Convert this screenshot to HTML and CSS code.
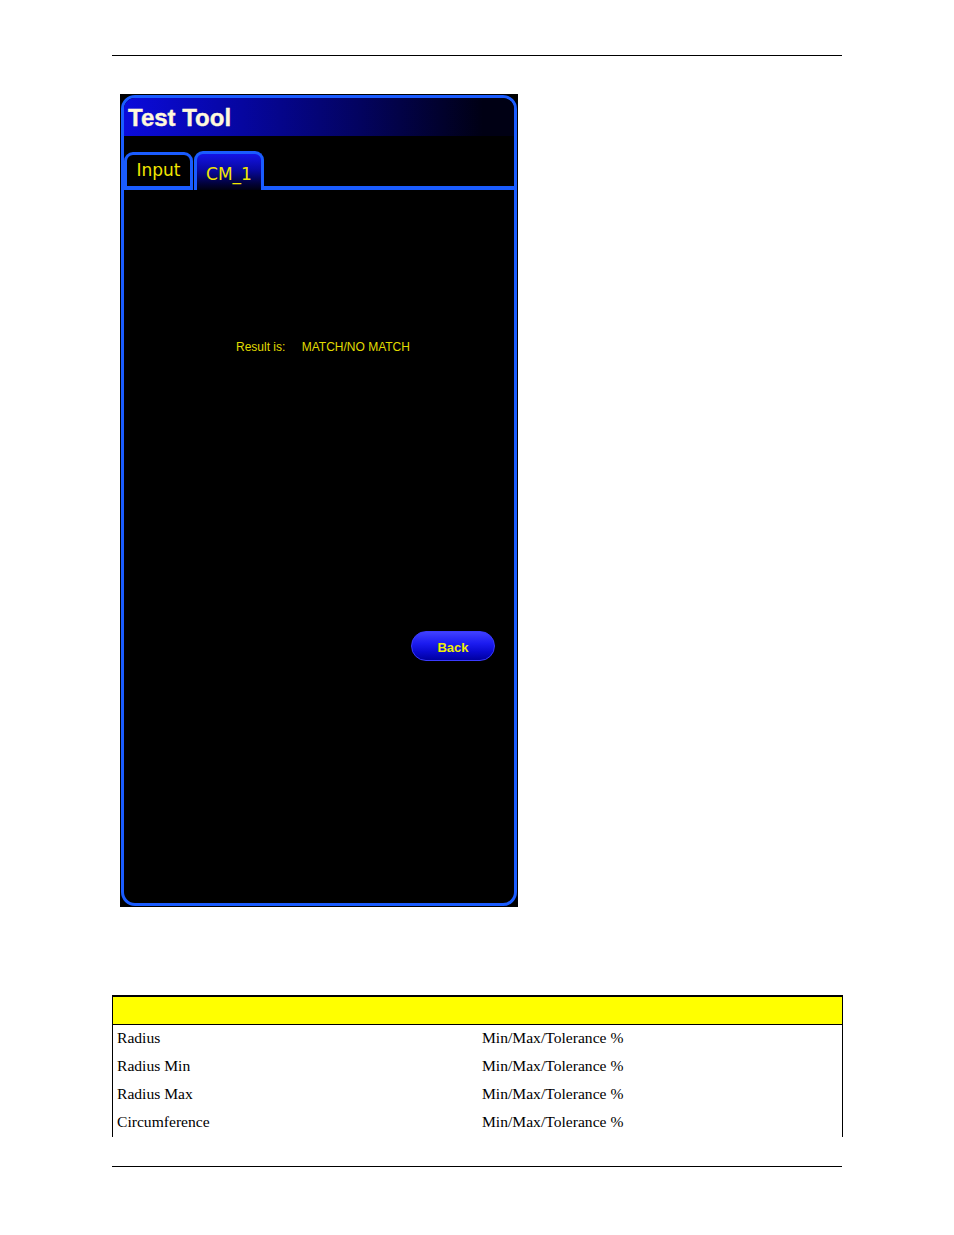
FILE: index.html
```html
<!DOCTYPE html>
<html>
<head>
<meta charset="utf-8">
<link rel="stylesheet" href="styles.css">
</head>
<body>
<div class="page">
  <div class="rule rule-top"></div>
  <div class="frame">
    <div class="window">
      <div class="titlebar">Test Tool</div>
      <div class="tabs">
        <div class="tab tab-input">Input</div>
        <div class="tab tab-active">CM_1</div>
        <div class="tab-fill"></div>
      </div>
      <div class="content">
        <div class="result">
          <span class="result-label">Result is:</span>
          <span class="result-value">MATCH/NO MATCH</span>
        </div>
        <div class="btn-back">Back</div>
      </div>
    </div>
  </div>
  <table class="spec">
    <tr class="spec-head"><td colspan="2"></td></tr>
    <tr><td class="c1">Radius</td><td class="c2">Min/Max/Tolerance %</td></tr>
    <tr><td class="c1">Radius Min</td><td class="c2">Min/Max/Tolerance %</td></tr>
    <tr><td class="c1">Radius Max</td><td class="c2">Min/Max/Tolerance %</td></tr>
    <tr><td class="c1">Circumference</td><td class="c2">Min/Max/Tolerance %</td></tr>
  </table>
  <div class="rule rule-bottom"></div>
</div>
</body>
</html>
```

FILE: styles.css
```css
html, body {
  margin: 0;
  padding: 0;
  background: #ffffff;
}
.page {
  width: 954px;
  height: 1235px;
  position: relative;
  font-family: "Liberation Serif", "Times New Roman", serif;
}
.rule {
  margin-left: 112px;
  width: 730px;
  border-top: 1px solid #000;
}
.rule-top {
  margin-top: 55px;
}
.frame {
  margin-left: 120px;
  margin-top: 38px;
  width: 398px;
  height: 813px;
  background: #000;
  padding: 1px;
  box-sizing: border-box;
}
.window {
  height: 100%;
  box-sizing: border-box;
  border: 3px solid #1a5cff;
  border-radius: 14px;
  display: flex;
  flex-direction: column;
  overflow: hidden;
  background: #000;
}
.titlebar {
  height: 38px;
  line-height: 38px;
  padding-left: 4px;
  padding-top: 1px;
  box-sizing: border-box;
  background: linear-gradient(90deg, #0b0bdb 0%, #0606a0 30%, #030360 60%, #000014 92%);
  color: #fff8dc;
  font-family: "Liberation Sans", Arial, sans-serif;
  font-weight: bold;
  font-size: 24px;
  -webkit-text-stroke: 0.4px #fff8dc;
  flex: none;
}
.tabs {
  margin-top: 15px;
  height: 39px;
  display: flex;
  align-items: flex-end;
  flex: none;
}
.tab {
  box-sizing: border-box;
  width: 70px;
  border: 3px solid #1a5cff;
  border-bottom: none;
  border-radius: 9px 9px 0 0;
  color: #f2e600;
  font-family: "DejaVu Sans", Verdana, sans-serif;
  font-size: 17px;
  text-align: center;
}
.tab-input {
  width: 69px;
  height: 38px;
  border-bottom: 4px solid #1a5cff;
  line-height: 30px;
  background: #000;
}
.tab-active {
  margin-left: 1px;
  height: 39px;
  line-height: 36px;
  padding-top: 2px;
  background: linear-gradient(180deg, #1414e6 0%, #0808a0 45%, #020240 80%, #000010 100%);
}
.tab-fill {
  flex: 1;
  height: 0;
  border-bottom: 4px solid #1a5cff;
  align-self: flex-end;
}
.content {
  flex: 1;
  display: flex;
  flex-direction: column;
  padding-top: 150px;
  padding-left: 112px;
  padding-right: 19px;
  font-family: "Liberation Sans", Arial, sans-serif;
}
.result {
  height: 14px;
  line-height: 14px;
  font-size: 12px;
  color: #e0dc00;
  white-space: nowrap;
}
.result-value {
  margin-left: 13px;
}
.btn-back {
  align-self: flex-end;
  margin-top: 277px;
  width: 84px;
  height: 30px;
  box-sizing: border-box;
  border-radius: 15px;
  border: 1px solid #3a3aff;
  background: linear-gradient(180deg, #4040ff 0%, #1c1cf0 40%, #0a0ad0 70%, #0000a0 100%);
  color: #f0ee00;
  font-weight: bold;
  font-size: 13px;
  line-height: 31px;
  text-align: center;
}
.spec {
  margin-left: 112px;
  margin-top: 88px;
  width: 731px;
  border-collapse: collapse;
  font-size: 15.6px;
  color: #000;
}
.spec td {
  padding: 0 0 2px 4px;
  height: 26px;
  vertical-align: middle;
  border-left: 1px solid #000;
  border-right: 1px solid #000;
}
.spec-head td {
  height: 27px;
  background: #ffff00;
  border: 1px solid #000;
  border-top: 2px solid #000;
  padding: 0;
}
.c1 {
  width: 361px;
  border-right: none !important;
}
.c2 {
  border-left: none !important;
}
.rule-bottom {
  margin-top: 29px;
}
```
